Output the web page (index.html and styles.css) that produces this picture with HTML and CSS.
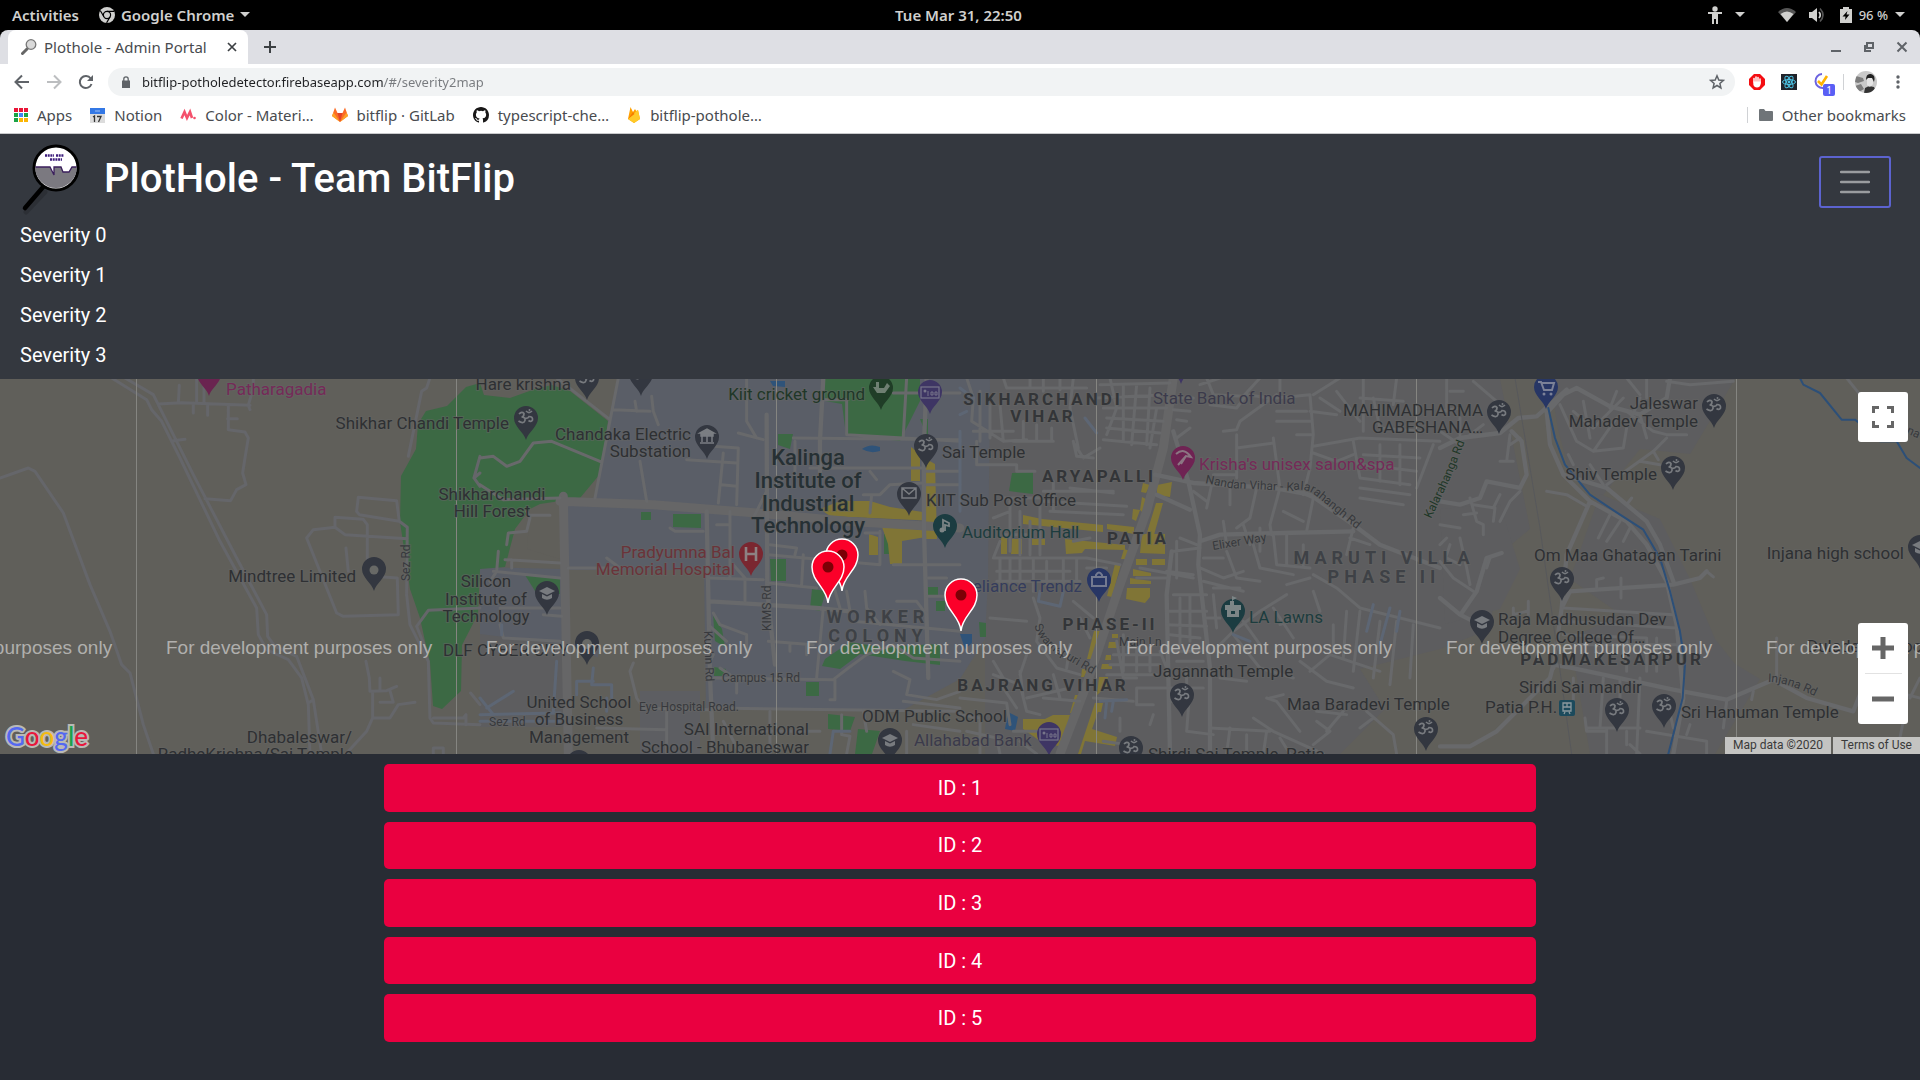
FILE: index.html
```html
<!DOCTYPE html>
<html lang="en">
<head>
<meta charset="utf-8">
<meta name="viewport" content="width=device-width, initial-scale=1">
<title>Plothole - Admin Portal</title>
<link rel="stylesheet" href="styles.css">
</head>
<body>
<header class="topbar">
  <div class="topbar-group">
    <button class="top-btn">Activities</button>
    <button class="top-btn top-app">
      <svg width="16" height="16" viewBox="0 0 16 16"><circle cx="8" cy="8" r="8" fill="#d0d0ce"/><circle cx="8" cy="8" r="3.6" fill="none" stroke="#000" stroke-width="1.2"/><path d="M8 4.4h7M4.900 9.800L1.400 3.800M11.100 9.800L7.600 15.900" stroke="#000" stroke-width="1.200"/></svg>
      <span>Google Chrome</span>
      <svg width="10" height="6" viewBox="0 0 10 6"><path d="M0 0h10L5 5z" fill="#d0d0ce"/></svg>
    </button>
  </div>
  <time class="clock">Tue Mar 31, 22:50</time>
  <div class="topbar-group topbar-right">
    <button class="top-btn top-access" aria-label="Accessibility">
      <svg width="16" height="18" viewBox="0 0 16 18" fill="#d0d0ce"><circle cx="8" cy="3" r="2.700"/><path d="M1 6h14v2h-4v10H9v-5H7v5H5V8H1z"/></svg>
      <svg width="10" height="6" viewBox="0 0 10 6"><path d="M0 0h10L5 5z" fill="#d0d0ce"/></svg>
    </button>
    <button class="top-btn top-system" aria-label="System menu">
      <svg width="18" height="14" viewBox="0 0 18 14"><path d="M0 4Q9-4 18 4L9 14z" fill="#555"/><path d="M2.500 6Q9 1 15.500 6L9 14z" fill="#d0d0ce"/></svg>
      <svg width="18" height="16" viewBox="0 0 18 16"><path d="M0 5h3l5-4v14l-5-4H0z" fill="#d0d0ce"/><path d="M10 5q2.500 3 0 6" fill="none" stroke="#d0d0ce" stroke-width="1.800"/><path d="M11 1.500q6 6.500 0 13" fill="none" stroke="#555" stroke-width="1.600"/></svg>
      <svg width="12" height="16" viewBox="0 0 12 16"><path d="M0 2h3V0h6v2h3v14H0z" fill="#d0d0ce"/><path d="M7.500 4L2.500 9.500h3L5 13l4.500-5.500h-3z" fill="#000"/></svg>
      <span class="battery">96 %</span>
      <svg width="10" height="6" viewBox="0 0 10 6"><path d="M0 0h10L5 5z" fill="#d0d0ce"/></svg>
    </button>
  </div>
</header>

<section class="browser" aria-label="Browser">
  <div class="tabstrip">
    <div class="tab">
      <svg width="16" height="16" viewBox="0 0 16 16"><path d="M6 10l-4.500 4.500" stroke="#666" stroke-width="3" stroke-linecap="round"/><circle cx="10" cy="5.500" r="4.800" fill="#d9d9d9" stroke="#777" stroke-width="1.300"/></svg>
      <span class="tab-title">Plothole - Admin Portal</span>
      <button class="plain" aria-label="Close tab"><svg width="10" height="10" viewBox="0 0 10 10"><path d="M1 1l8 8M9 1L1 9" stroke="#3c4043" stroke-width="1.700"/></svg></button>
    </div>
    <button class="plain new-tab" aria-label="New tab"><svg width="12" height="12" viewBox="0 0 12 12"><path d="M6 0v12M0 6h12" stroke="#3c4043" stroke-width="2"/></svg></button>
    <div class="window-buttons">
      <button class="plain" aria-label="Minimize"><svg width="12" height="12" viewBox="0 0 12 12"><path d="M1 10h10" stroke="#5f6368" stroke-width="2"/></svg></button>
      <button class="plain" aria-label="Restore"><svg width="12" height="12" viewBox="0 0 12 12" fill="none" stroke="#5f6368" stroke-width="2"><path d="M4 2h6v5H4zM2 4v6h6"/></svg></button>
      <button class="plain" aria-label="Close"><svg width="12" height="12" viewBox="0 0 12 12"><path d="M1.500 1.500l9 9M10.500 1.500l-9 9" stroke="#5f6368" stroke-width="2"/></svg></button>
    </div>
  </div>
  <div class="toolbar">
    <button class="plain" aria-label="Back"><svg width="16" height="16" viewBox="0 0 16 16" fill="none" stroke="#5f6368" stroke-width="2"><path d="M15 8H2M8 1.500L1.500 8 8 14.500"/></svg></button>
    <button class="plain" aria-label="Forward"><svg width="16" height="16" viewBox="0 0 16 16" fill="none" stroke="#bcbec0" stroke-width="2"><path d="M1 8h13M8 1.500L14.500 8 8 14.500"/></svg></button>
    <button class="plain" aria-label="Reload"><svg width="16" height="16" viewBox="0 0 16 16"><path d="M13.500 10a6 6 0 1 1-.8-5.500" fill="none" stroke="#5f6368" stroke-width="2"/><path d="M15 1v6H9z" fill="#5f6368"/></svg></button>
    <div class="omnibox">
      <svg width="10" height="12" viewBox="0 0 10 12"><path d="M1 4.500h8V12H1z" fill="#5f6368"/><path d="M2.800 5V3a2.200 2.200 0 0 1 4.400 0v2" fill="none" stroke="#5f6368" stroke-width="1.300"/></svg>
      <input class="url" type="text" aria-label="Address" value="bitflip-potholedetector.firebaseapp.com/#/severity2map">
      <button class="plain" aria-label="Bookmark this page"><svg width="16" height="16" viewBox="0 0 16 16"><path d="M8 1.800l1.800 4.200 4.500.4-3.400 3 1 4.500L8 11.500l-3.900 2.400 1-4.500-3.400-3 4.500-.4z" fill="none" stroke="#5f6368" stroke-width="1.500"/></svg></button>
    </div>
    <div class="extensions">
      <button class="plain" aria-label="Ad blocker"><svg width="16" height="16" viewBox="0 0 16 16"><path d="M5 0h6l5 5v6l-5 5H5l-5-5V5z" fill="#f40d12"/><path d="M5 8V4.500M7 8V3M9 8V3.500M11 9V5" stroke="#fff" stroke-width="1.500" stroke-linecap="round"/><path d="M4.300 7.500h7.400v2.500q-.7 3.500-3.700 3.500-3 0-3.700-3z" fill="#fff"/></svg></button>
      <button class="plain" aria-label="React tools"><svg width="16" height="16" viewBox="0 0 16 16"><path d="M0 0h16v16H0z" fill="#20232a"/><g fill="none" stroke="#4cc3e4" stroke-width="1"><ellipse cx="8" cy="8" rx="6.500" ry="2.500"/><ellipse cx="8" cy="8" rx="6.500" ry="2.500" transform="rotate(60 8 8)"/><ellipse cx="8" cy="8" rx="6.500" ry="2.500" transform="rotate(120 8 8)"/></g><circle cx="8" cy="8" r="1.400" fill="#4cc3e4"/></svg></button>
      <button class="plain tick" aria-label="Tasks"><svg width="22" height="22" viewBox="0 0 22 22"><path d="M9 3A7 7 0 1 0 10 17" fill="none" stroke="#6c63e0" stroke-width="2"/><path d="M5 10l3.500 3.500L14 5" fill="none" stroke="#ffb300" stroke-width="2.600"/></svg><span class="badge">1</span></button>
      <span class="divider"></span>
      <button class="plain" aria-label="Profile"><svg width="22" height="22" viewBox="0 0 22 22"><clipPath id="av"><circle cx="11" cy="11" r="11"/></clipPath><g clip-path="url(#av)"><path d="M0 0h22v22H0z" fill="#c9c9c9"/><path d="M1 5l7 2 1 3-6 2-3-1zM0 15l6-2 3 5-5 3z" fill="#7d7d7d"/><path d="M9 22l1-5 4-2 5 1 3 6z" fill="#333"/><path d="M12 7q3-3 6 0v6q-3 5-6 1z" fill="#e4e4e4"/><path d="M11 9q0-7 5-6 5 1 3 8l-2-4-4 0z" fill="#222"/></g></svg></button>
      <button class="plain menu" aria-label="Menu"><svg width="4" height="14" viewBox="0 0 4 14" fill="#5f6368"><circle cx="2" cy="2" r="1.700"/><circle cx="2" cy="7" r="1.700"/><circle cx="2" cy="12" r="1.700"/></svg></button>
    </div>
  </div>
  <nav class="bookmarks" aria-label="Bookmarks">
    <a href="#"><svg width="14" height="14" viewBox="0 0 14 14"><path d="M0 0h4v4H0zM5 0h4v4H5zM10 0h4v4h-4z" fill="#ea1537"/><path d="M0 5h4v4H0zM0 10h4v4H0z" fill="#1ba345"/><path d="M5 5h4v4H5z" fill="#4285f4"/><path d="M10 5h4v4h-4z" fill="#1ba345"/><path d="M5 10h4v4H5zM10 10h4v4h-4z" fill="#fbb605"/></svg><span>Apps</span></a>
    <a href="#"><svg width="15" height="15" viewBox="0 0 15 15"><path d="M0 0h15v6H0z" fill="#3478e5"/><path d="M0 6h15v9H0z" fill="#dcdcdc"/><path d="M5 3h5" stroke="#9fc0f5"/><path d="M3 9l1.500-1v6M7 8.500h4L8.500 14" fill="none" stroke="#333" stroke-width="1.300"/></svg><span>Notion</span></a>
    <a href="#"><svg width="16" height="16" viewBox="0 0 16 16"><path d="M1.500 11.500L4.500 5l2.500 6L10 5l2 6" fill="none" stroke="#f4516c" stroke-width="2.600"/><circle cx="14.500" cy="11" r="1.300" fill="#f4516c"/></svg><span>Color - Materi…</span></a>
    <a href="#"><svg width="16" height="16" viewBox="0 0 16 16"><path d="M0 9l3-8.500L5.500 6h5L13 .5 16 9l-8 6z" fill="#fc6d26"/><path d="M5.500 6h5L8 15z" fill="#e24329"/><path d="M0 9l1.500-3.500L8 15zM16 9l-1.500-3.500L8 15z" fill="#fca326"/></svg><span>bitflip · GitLab</span></a>
    <a href="#"><svg width="16" height="16" viewBox="0 0 16 16"><path fill="#181717" d="M8 0C3.580 0 0 3.580 0 8c0 3.540 2.290 6.530 5.470 7.590.4.070.55-.17.55-.38v-1.490c-2.010.37-2.530-.49-2.690-.94-.09-.23-.48-.94-.82-1.130-.28-.15-.68-.52-.01-.53.63-.01 1.080.58 1.230.82.72 1.210 1.870.87 2.330.66.070-.52.280-.87.510-1.070-1.780-.2-3.640-.89-3.640-3.950 0-.87.310-1.590.82-2.150-.08-.2-.36-1.020.08-2.120 0 0 .67-.21 2.200.82a7.600 7.600 0 0 1 4 0c1.530-1.040 2.200-.82 2.200-.82.44 1.100.16 1.920.08 2.120.51.56.82 1.270.82 2.150 0 3.070-1.870 3.750-3.650 3.950.29.25.54.73.54 1.480v2.200c0 .21.15.46.55.38A8 8 0 0 0 16 8c0-4.420-3.580-8-8-8z"/></svg><span>typescript-che…</span></a>
    <a href="#"><svg width="14" height="16" viewBox="0 0 14 16"><path d="M1 12L3.500 0 6 5l2-3 1.500 2.500L11 3l2 9-6 4z" fill="#ffa000"/><path d="M1 12l9-8.500L11 3l2 9-6 4z" fill="#ffca28"/><path d="M1 12l5-7 1.500 2z" fill="#f57c00"/></svg><span>bitflip-pothole…</span></a>
    <a href="#" class="other"><svg width="14" height="12" viewBox="0 0 14 12"><path d="M0 1q0-1 1-1h4l1.500 2H13q1 0 1 1v8q0 1-1 1H1q-1 0-1-1z" fill="#6f7478"/></svg><span>Other bookmarks</span></a>
  </nav>
</section>

<main class="app">
  <nav class="navbar" aria-label="Main">
    <div class="brand-row">
      <a class="brand" href="#">
        <svg width="62" height="72" viewBox="0 0 62 72"><path d="M25 46L6 66" stroke="#000" stroke-opacity=".15" stroke-width="5" stroke-linecap="round" transform="translate(0 3)"/><path d="M24 43L5 65" stroke="#000" stroke-width="4.500" stroke-linecap="round"/><circle cx="36" cy="25" r="22" fill="#fff" stroke="#000" stroke-width="3"/><path d="M15 24h15l4 8v-8h7l2 5h6l3-5h5a21 21 0 0 1-42 0z" fill="#7b7980"/><path d="M15.500 24H30l4 8v-8h7l2 5h6l3-5h4.500" fill="none" stroke="#3b1f5c" stroke-width="1.300"/><path d="M25 12.500h9M36 12.500h8M30 16.500h12" stroke="#3d1d7c" stroke-width="2.400" stroke-dasharray="2 .7"/></svg>
        <span>PlotHole - Team BitFlip</span>
      </a>
      <button class="toggler" aria-label="Toggle navigation"><svg width="30" height="24" viewBox="0 0 30 24"><path d="M1 2h28M1 12h28M1 22h28" stroke="#9a9c9f" stroke-width="2.400" stroke-linecap="round"/></svg></button>
    </div>
    <a class="nav-link" href="#">Severity 0</a>
    <a class="nav-link" href="#">Severity 1</a>
    <a class="nav-link" href="#">Severity 2</a>
    <a class="nav-link" href="#">Severity 3</a>
  </nav>

  <section class="map" aria-label="Map">
    <svg class="map-canvas" width="1920" height="375" viewBox="0 0 1920 375">
      <defs>
        <path id="pin" d="M0 0C-2-8-12-13-12-22a12 12 0 1 1 24 0C12-13 2-8 0 0z"/>
        <g id="om"><use href="#pin"/><path d="M-7-26q3-3 5-.5 0 3.500-2.500 3.500 4 0 3.500 3.500-1.500 4-6.500.5M-2-22q4 1 5-1.500 4 0 3.500 3.500-1.500 2.500-4 .5M0-29q3 3 6 0" fill="none" stroke="#787b7f" stroke-width="1.700"/><circle cx="3.500" cy="-30" r="1" fill="#787b7f"/></g>
        <g id="cap"><use href="#pin"/><path d="M-8-24l8-4 8 4-8 4zM-5-21v4q5 3.500 10 0v-4l-5 2.500z" fill="#787b7f"/></g>
        <g id="money"><use href="#pin"/><rect x="-9" y="-27" width="18" height="11" fill="none" stroke="#77758a" stroke-width="1.200"/><circle cx="-5" cy="-23" r="1.500" fill="#77758a"/><path d="M-2-23v5M1-22h2v3H1zM5-22h2v3H5z" fill="none" stroke="#77758a"/></g>
        <g id="marker"><path d="M0 0C-1-15-16-21-16-36a16 16 0 1 1 32 0C16-21 1-15 0 0z" fill="#fb0029" stroke="#fff" stroke-width="1.500"/><circle cy="-36" r="5.500" fill="#7c0006"/></g>
      </defs>

      <rect width="1920" height="375" fill="#605f5a"/>
      <g class="land-city">
        <path d="M985 0H1500L1518 90 1530 150 1500 175 1490 250 1440 270 1360 290 1385 330 1340 375H480V250L560 262 570 265V375H985z"/>
        <path d="M1550 0H1735L1690 75 1640 70 1620 95 1600 120 1570 95 1558 50z"/>
        <path d="M1440 130L1500 125 1520 190 1500 230 1445 245z"/>
        <path d="M1600 115L1660 140 1690 200 1715 260 1735 285 1760 300 1715 375H1590L1570 260 1620 235 1570 200z"/>
      </g>
      <path d="M480 188L562 190V265L480 255z" fill="#5a5e67"/>
      <path d="M618 0H990L988 200 985 260 960 300 905 330H704L570 265V190L558 130 595 118 608 42z" fill="#5a5e67"/>
      <path d="M570 191H704L706 330H640L598 310V265H570zM0 348H570V375H0zM600 310H650V330H600zM530 130H560V180L527 170z" fill="#605f5a"/>
      <path d="M640 312H700V375H640z" fill="#5d5e62"/>
      <path d="M401 97L416 70 418 45 426 32 447 27 466 8 480 4 484 16 510 19 535 10 552 6 570 12 608 42 600 95 580 119 540 125 530 130 515 150 505 188 480 190 478 235 462 266 461 312 442 330 433 327 430 283 425 262 420 239 410 210 400 143z" fill="#3c6944"/>
      <path d="M823 0H920V22L900 62 846 56 842 25 825 22zM778 55H793L790 70 778 66zM641 133H651V141H641zM673 135H701V149L673 148zM525 196L560 200V215L535 212zM770 180H786V202H771zM812 210L826 212 820 232 810 230zM825 280L850 263 880 268 940 265V286L905 282 860 275 840 290 822 287zM828 335L855 338 850 352 828 350zM858 350L880 352 872 375H855zM806 303H819V317H806zM713 235L722 250 725 268 715 262zM714 288L726 290 722 297 714 297zM1012 94L1033 93V115L1009 112zM979 243L986 244V258L980 258zM928 208H938V216H928zM936 222H945V232H936zM928 60V40H920zM884 155H890V175H884z" fill="#3c6944"/>
      <path d="M862 70Q870 64 880 68V72Q870 75 862 70zM770 2H785V8L773 7zM960 255H972V264L965 270zM1008 333L1018 338 1015 352 1005 350z" fill="#2f5379"/>
      <g class="commerce">
        <path d="M911 68L920 75V102H911zM926 80L935 85 937 160H925zM820 130L840 122H870L890 128 936 135V142L830 137zM882 148H926V158L902 162V185L890 185 888 165zM869 155L878 158V176H869z"/>
        <path d="M1001 158H1007V175H1001zM1012 160H1022V175H1011zM1023 136L1042 140 1103 146V153L1023 145zM1065 160L1125 166V171L1085 170 1082 174 1066 175zM1107 145L1134 148V155L1107 150zM1032 160H1045V166H1032z"/>
        <path d="M1143 104L1150 106 1146 114 1141 113zM1133 130L1140 131 1136 142 1132 140zM1157 106L1172 103 1170 118 1157 116zM1156 124H1163L1150 170H1142zM1142 155H1165V175L1140 174zM1130 172L1127 180H1121L1124 170zM1136 180H1147V186H1136zM1152 180H1165V186H1152zM1115 185H1121L1112 218 1107 217zM1133 190L1151 194V197H1133zM1130 199L1151 202V205H1130zM1127 209H1150V218L1145 224 1126 220z"/>
        <path d="M1094 252H1100L1093 280H1087zM1112 255H1118V259H1112zM1109 263H1117V269H1108zM1106 276H1111V281H1105zM1102 285H1112V290H1101zM1099 298H1108V306L1097 316zM1075 316H1078L1072 334H1070zM1023 340H1045L1053 336H1070L1062 368 1040 362 1023 350zM1095 324H1103L1101 333H1098L1092 350 1117 358 1115 367 1085 362 1081 375H1078z"/>
        <path d="M1082 290H1088L1084 298H1081zM1140 131L1142 118 1146 120 1144 135z"/>
      </g>

      <g transform="translate(0 -1) scale(.3333)" class="roads roads-rural">
        <path d="M335 0L440 65 455 95 485 130 540 240 660 490 770 690 775 770 800 815 865 845 905 900 925 980 930 1128M375 0L460 50 500 130 580 290 710 540 800 710 803 775 825 805 890 835 940 965 965 1128M0 300L85 270 105 280 190 405 270 620 330 760 365 860 390 885 430 1040 460 1128M925 975L940 965M520 188L555 184"/>
        <path d="M475 78L545 74 750 82M535 75L538 22M590 75V0M612 75V0M750 95L745 82 760 30V0M580 75V105M623 80V112M685 82V155L735 162 745 180 735 240 728 285 738 320 710 335 692 368 615 362M683 122H712M1290 0L1280 30 1265 40 1225 235"/>
        <path d="M1070 400L1075 358 1190 368 1198 430 1222 448 1220 650M1070 400L1078 410 1198 430M1005 445V418L1090 424 1102 440V590M920 480L940 455 1005 448 1035 470 1222 482M920 480L1010 705 1030 715 1195 710 1192 600 1150 597M1038 510L1045 580"/>
        <path d="M1220 650L1230 740 1285 850 1290 1020 1300 1035 1440 1040M1098 850L1108 900 1110 940 1160 938 1190 925M1118 940V1020H1170L1195 980 1245 973M1140 973H1180L1170 938M1118 1020L1100 1060 1045 1120M1140 900V935M1300 1128V1110H1330V1128"/>
        <path d="M1440 285L1422 300 1440 325M1440 235L1422 300M1250 745L1285 697 1440 690M1250 745L1280 820M1300 1020H1390L1398 1010V1040M1412 945L1440 980"/>
      </g>
      <g transform="translate(480 -1) scale(.3333)" class="roads">
        <path class="wide" d="M250 355L265 1128M240 370L520 380 830 405 1100 430 1440 450"/>
        <path class="mid" d="M1340 0L1332 200V450L1345 900M680 400L690 890 700 1128M860 110L862 640 885 860M1030 0L1020 190V300M690 670L1010 690 1110 700"/>
        <path d="M0 240L40 235 80 265 120 250 160 195 215 190 360 250M415 0L345 360M230 0L390 125M400 95L510 100M465 70L470 100M515 55L520 100 535 140M800 0V130L830 180M775 165L850 185M620 245L770 255M770 380L775 210 700 205M730 225L715 375M725 320L770 325M480 250L500 370M0 320L70 365 240 360"/>
        <path d="M80 500L85 465 140 460 150 420 140 400M150 412H210M55 520L50 580 30 610M75 545L240 555M40 580L240 600M95 545V570M190 710L245 715M60 690H240M60 740L70 780 240 790M265 570L420 570M380 540L420 570M570 450L585 460H670M685 600L850 605M750 400V600M710 440H750M760 560L795 600V670M870 500L950 510 945 530M865 530L1200 560V460M970 530L965 620M865 615L1010 630M1030 690L1010 900"/>
        <path d="M1100 70V170L1440 190M1270 175L1280 0M940 180L1440 185M1025 65H1100M1240 45H1440M990 270H1330M1170 280L1190 305M1150 350H1200L1230 320 1330 315M945 190V290M1340 320H1440M1340 280H1440M1175 350L1170 405M1155 465H1200M1240 560H1440M1345 600H1400M860 340L820 420"/>
        <path d="M700 705L720 740 800 770V830M690 745L740 790M720 870L750 890M700 830L690 850M700 900L1060 905 1105 870 1160 830 1240 800 1300 840 1440 850M1065 905V965H1050M1240 880L1290 905 1280 950 1370 965 1440 940M770 910V945M690 990L1440 1000M865 790L1000 800M930 800V820M980 800V830M1060 620L1080 690M1100 640L1110 700M1155 640L1160 690 1200 740M1120 730L1440 760M1250 670H1310L1340 710M1340 655H1440"/>
        <path d="M460 855L450 880 470 960 490 990 690 995M350 1050L560 1055M560 1000V1128M870 1000V1128M730 1030L780 1128M850 1060H1020M1150 1000L1160 1060M1280 1060V1128M1300 1040L1440 1060M1270 970L1440 990M1100 1128L1110 1075 1085 1070V1010"/>
        <path class="campus" d="M0 960L40 1010M20 990L100 940M0 1010L240 1005M230 850L220 1000M340 870L335 920H395V960M290 950V910H340M380 960V1000M65 740V770M0 1030H240M1050 1128L1060 1060H1110"/>
      </g>
      <g transform="translate(960 -1) scale(.3333)" class="roads">
        <path class="wide" d="M640 0L610 210 560 400 480 620 420 800 380 920 300 1128"/>
        <path class="mid" d="M640 160L685 310 720 470 715 560 750 870V1128M585 290L700 315 940 330 1050 350 1180 440 1260 500 1440 570M590 350L690 395M720 490L780 470 970 465 1180 460M635 520L620 650 630 1128"/>
        <path d="M20 0L40 60 35 130 130 190M60 40V190M90 80V180M120 80L130 190 200 185M40 160H160M190 130V190M230 140V190M275 150V190M160 190H280M130 0L140 30H380M210 0V30M250 0V40M300 0V35M340 0L330 90 355 210M345 200L370 240 420 210M50 190V260H170V280H225M340 190L350 235 400 240"/>
        <path d="M410 60L620 50M420 20L630 15M430 90L620 90M440 120L610 130M450 0L470 90 440 170M490 20V190M530 20L515 200M570 30L560 200M590 90L570 210M440 150L600 165M430 185L590 200M640 60L700 60M640 95L690 100M650 125L680 130M650 180L690 150"/>
        <path d="M740 0L760 50 850 55 900 0M720 20L780 0M750 80L830 90 860 50 930 60M790 160L830 155 840 130 950 50M830 170V300M950 60L1050 50 1060 170 1050 270 1030 350M940 180L960 330 930 440 935 470M830 210L940 195M950 100H1040M950 130H1050M1050 100L1130 110M960 0V40M1060 50L1140 0M1080 60L1140 100M1010 170H1060M1060 205L1200 180 1440 190M1060 225L1130 250 1180 230M990 330L1060 360 1040 460M970 400L1030 430M755 320L740 390M810 320V380M890 330L870 420 830 450M700 340L740 370M760 290L830 290"/>
        <path d="M1210 0V160M1240 60L1260 150 1380 160M1130 40L1200 130M1200 60L1330 70M1310 0L1300 80M1180 190L1200 300 1350 320M1210 230L1380 240M1210 260L1370 280M1260 200V310M1320 200V320M1200 330L1350 350M1200 360L1330 380M1370 330L1420 200"/>
        <path d="M250 340H460M280 310V400M330 330L460 345M130 360H240M150 370V520M180 400V530M210 430V530M240 380V520M250 370L500 385M270 400L490 410M130 470H200M100 420L150 400M120 490L100 540H190L380 540 480 560M120 540V640M150 540V630M180 545V640M220 545V640M260 550V620M310 540V630M350 545V630M110 580H330M110 610H360M240 480V530M340 490L390 480M380 570H440"/>
        <path d="M540 570L700 600M530 600H620M640 520L720 510M650 490V600M660 480L710 500M620 580L700 590M720 570L790 600 850 580M800 520L830 600 900 610M790 430L800 500M880 500L900 570 1000 590M730 540H790M850 440L870 500M900 450V520M940 470L950 560 1050 570M1030 500V560M980 470V560M1180 450L1160 530M1170 480L1230 500M1060 590L1130 630 1200 690 1440 750M760 630H840M730 610L850 640M620 700H740M620 740L740 745M630 770L720 780M640 650H740M660 660V800M690 650V790M760 650L770 750M740 720H780"/>
        <path d="M470 790L490 900 530 900M460 830H600M450 860H600M440 890H590M490 770V880M530 810V880M570 810V880M600 820L620 870M530 930H730M530 930V980H580M630 970H680M690 930L680 1060 760 1070M580 1010L570 1040M480 1020V1060M400 960L520 970M640 820H720M650 850H730M680 870V960"/>
        <path d="M220 660L240 720 230 790 290 870 360 890M90 720L200 730M100 850L130 900M100 890L180 920 200 1000 240 1010M130 930L170 990M180 880L190 960M200 830L180 890M0 960L140 975 150 1040M0 1010L60 1020M20 1060L110 1080 120 1128M60 1020V1128M250 960L360 970M280 890L300 960M200 960L330 930M330 800L320 870M340 670L400 720M360 720L390 780M160 1060H250M180 1090L230 1128"/>
        <path d="M780 800L820 760 900 700 980 650M850 730L900 800M820 770L900 870 1000 900M940 690L1000 780M960 740L1020 720M1060 640L1080 700M1020 850L1100 910 1180 930M1050 880L1110 830 1260 880M1120 740V820M1160 700L1150 840M1200 700L1180 880M1260 730L1240 900M1310 730L1290 920M1360 740L1350 900M980 620L1050 600"/>
        <path d="M920 960L950 970 1020 1060M930 960L970 950M880 1020L940 1060 1090 1128M1070 1000L1160 1010M1070 1030L1110 1060 1060 1100M1150 1000L1100 1060M750 1050L930 1060M810 1050L800 1128M860 1070V1128M920 1060L910 1128M1220 1000L1300 1070 1310 1128M1240 1020L1200 1050M780 900L860 910M960 1080L990 1128M430 1090L500 1100"/>
        <path class="campus" d="M0 30L40 60M20 100L0 110M375 120L410 165M240 640L235 670 300 685 310 640M420 970L500 965M440 970L435 1020M460 970L455 1000M1240 680L1220 760M1290 690L1260 800M1320 700L1310 760M820 770L870 790M0 160V400"/>
      </g>
      <g transform="translate(1440 -1) scale(.3333)" class="roads">
        <path class="mid" d="M320 100L330 200 370 290 450 370 560 430 620 500 680 610 710 740 725 900 730 960 700 1128M325 100L370 50 410 30 510 85 600 110 680 60 690 0M370 290L500 330 620 430 660 500 700 610M0 370L60 380 120 360 140 310 240 330 260 290 245 190 215 160M0 210L60 180 180 165 235 120 290 115 380 35M0 660L60 710 120 740M65 705L110 640 140 540 185 525M0 1105H90L170 1060 330 900 340 860 395 870 700 935 860 965 1000 905 1100 960 1240 1000 1260 950M390 640L700 620 780 600 800 580M390 640L365 690 340 870M450 370L380 530 365 690"/>
        <path d="M0 100L60 90M20 0V100M30 40H70M100 10L170 70M130 140L90 170M0 160L60 200M60 120V170M210 170L200 250M240 180L210 200M180 250H220M400 100L460 150 550 60M360 80L410 190 460 220 530 120M460 220L550 210 560 150M430 70L450 180M600 110L620 180M560 100L640 160 680 170H740M500 320L640 220 680 180M600 250L660 260M640 220L655 245M385 230L400 260M450 260L490 320M680 10L750 20 880 10M560 0L600 50M620 0V60M510 90L530 40M570 130L600 60"/>
        <path d="M90 360L110 430 130 440V470M70 410L110 405M100 380L165 390 160 430M160 390L180 350M180 430L210 370 240 340M0 440L60 450M0 500L20 480M60 480L80 570 90 620M20 540L60 560M320 340L380 350 440 385M475 480L510 410M500 490L540 430M550 490L570 450M560 380L575 360M0 550L40 600 100 640M30 500L10 560M150 540L140 570M470 630V605L490 600M543 600V660M800 580L820 597"/>
        <path d="M370 690L700 710M370 730L710 750M370 770L620 780M420 800H710M560 790V880M620 780V880M650 780V880M220 690V740M265 670V710M220 710L260 700M400 900V980M490 900L480 1050M600 900L590 1128M540 900V960M435 1020L440 1060H500M440 1050H600M500 1050V1128M560 1060V1100M680 960L700 1050M620 1060L800 1090V1128M570 1100L600 1128M750 1040L740 1070M860 970L850 1050M940 940L935 965M1010 780V900M1370 1128L1390 1030M1400 950L1440 960M1440 900L1410 960M1220 0L1260 50"/>
        <path class="rail" d="M225 0L300 450 395 1128"/>
        <path class="river" d="M325 90L345 180 375 260 450 350 540 410 610 455 660 540 690 640 720 760 735 860 728 960 685 1128M1080 0L1090 20 1140 45 1205 125H1245L1290 160 1320 190H1370L1400 240 1440 270"/>
      </g>

      <g class="tile-lines"><path d="M136.500 0V375M456.500 0V375M776.500 0V375M1096.500 0V375M1416.500 0V375M1736.500 0V375"/></g>

      <g fill="#333740">
        <use href="#om" x="526" y="61"/><use href="#om" x="587" y="21"/><use href="#om" x="641" y="17"/>
        <use href="#pin" x="374" y="212"/><circle cx="374" cy="191" r="4.500" fill="#686966"/>
        <use href="#cap" x="547" y="236"/><use href="#pin" x="587" y="286"/><circle cx="587" cy="265" r="5" fill="#686966"/>
        <use href="#pin" x="707" y="80"/><path d="M700 54l7-4 7 4zM701 55h12v2h-12zM702 57v6M707 57v6M712 57v6M700 64h14" stroke="#7b7e82" stroke-width="1.500" fill="#7b7e82"/>
        <use href="#om" x="926" y="89"/><use href="#pin" x="909" y="137"/><path d="M902 109h14v10h-14zl7 6 7-6" fill="none" stroke="#7b7e82" stroke-width="1.500"/>
        <use href="#cap" x="890" y="383"/><use href="#om" x="1499" y="55"/><use href="#om" x="1182" y="338"/><use href="#om" x="1426" y="372"/><use href="#om" x="1131" y="391"/>
        <use href="#om" x="1714" y="49"/><use href="#om" x="1673" y="111"/><use href="#om" x="1562" y="222"/><use href="#cap" x="1920" y="190"/><use href="#cap" x="1482" y="265"/><use href="#om" x="1617" y="353"/><use href="#om" x="1664" y="349"/><use href="#pin" x="579" y="405"/>
      </g>
      <use href="#pin" x="209" y="17" fill="#6a2450"/>
      <g fill="#203d27"><use href="#pin" x="881" y="31"/></g><path d="M873 8l4 6h8l5-7-3-3-3 5h-5V3h-3v5z" fill="#6f7f72"/>
      <g fill="#3e3564"><use href="#money" x="930" y="35"/><use href="#money" x="1049" y="377"/><use href="#pin" x="1181" y="5"/></g>
      <g fill="#1b3c41"><use href="#pin" x="945" y="169"/><use href="#pin" x="1233" y="254"/></g>
      <path d="M943 150v-9l6 3v3l-4-1v6" fill="none" stroke="#7c8586" stroke-width="1.800"/><circle cx="942" cy="151" r="2.500" fill="#7c8586"/>
      <path d="M1225 226h5v-4h4v4h7v5h-2v7h-12v-7h-2z" fill="#7c8586"/><path d="M1231 232h4v3h-4z" fill="#1b3c41"/><path d="M1232 223v-6l5 2-4 2" fill="#7c8586"/>
      <use href="#pin" x="751" y="197" fill="#7a2730"/><path d="M746 168v14M756 168v14M746 175h10" stroke="#8d8283" stroke-width="2.600"/>
      <use href="#pin" x="1183" y="101" fill="#6f2353"/><path d="M1176 75q8-7 15 3l-5-1-5 8M1186 77l-8 9" stroke="#8c7683" stroke-width="2" fill="none"/>
      <g fill="#273665"><use href="#pin" x="1099" y="223"/><use href="#pin" x="1546" y="30"/></g>
      <path d="M1092 198h14v9h-14zM1096 198v-2q3-5 6 0v2" fill="none" stroke="#737a90" stroke-width="2"/><path d="M1538 3h3l3 8h8l2-7h-12" fill="none" stroke="#7b8197" stroke-width="2"/><circle cx="1544" cy="15" r="1.500" fill="#7b8197"/><circle cx="1551" cy="15" r="1.500" fill="#7b8197"/>
      <rect x="1559" y="321" width="16" height="16" rx="2" fill="#1c4a5c"/><path d="M1563 324h8v8h-8zM1563 328h8M1567 324v4M1564 335l1-2M1570 335l-1-2" fill="none" stroke="#8c999e" stroke-width="1.300"/>

      <g class="labels">
        <text x="226" y="16" class="pink">Patharagadia</text>
        <text x="509" y="50" class="end">Shikhar Chandi Temple</text>
        <text x="571" y="11" class="end">Hare krishna</text>
        <text x="492" y="121" class="mid-text">Shikharchandi</text><text x="492" y="138" class="mid-text">Hill Forest</text>
        <text x="356" y="203" class="end">Mindtree Limited</text>
        <text x="486" y="208" class="mid-text">Silicon</text><text x="486" y="226" class="mid-text">Institute of</text><text x="486" y="243" class="mid-text">Technology</text>
        <text x="443" y="277">DLF CYBER CITY</text>
        <text x="691" y="61" class="end">Chandaka Electric</text><text x="691" y="78" class="end">Substation</text>
        <text x="865" y="21" class="end forest">Kiit cricket ground</text>
        <text x="942" y="79">Sai Temple</text>
        <text x="926" y="127">KIIT Sub Post Office</text>
        <text x="962" y="159" class="teal">Auditorium Hall</text>
        <text x="735" y="179" class="end hospital">Pradyumna Bal</text><text x="735" y="196" class="end hospital">Memorial Hospital</text>
        <text x="579" y="329" class="mid-text">United School</text><text x="579" y="346" class="mid-text">of Business</text><text x="579" y="364" class="mid-text">Management</text>
        <text x="809" y="356" class="end">SAI International</text><text x="809" y="374" class="end">School - Bhubaneswar</text>
        <text x="862" y="343">ODM Public School</text><text x="914" y="367" class="violet">Allahabad Bank</text>
        <text x="352" y="364" class="end">Dhabaleswar/</text><text x="353" y="381" class="end">RadheKrishna/Sai Temple</text>
        <text x="1153" y="25" class="violet">State Bank of India</text>
        <text x="1483" y="37" class="end">MAHIMADHARMA</text><text x="1483" y="54" class="end">GABESHANA…</text>
        <text x="1199" y="91" class="pink">Krisha's unisex salon&amp;spa</text>
        <text x="1082" y="213" class="end blue">Reliance Trendz</text>
        <text x="1249" y="244" class="teal">LA Lawns</text>
        <text x="1153" y="298">Jagannath Temple</text><text x="1287" y="331">Maa Baradevi Temple</text>
        <text x="1148" y="381">Shirdi Sai Temple, Patia</text>
        <text x="1698" y="30" class="end">Jaleswar</text><text x="1698" y="48" class="end">Mahadev Temple</text>
        <text x="1657" y="101" class="end">Shiv Temple</text><text x="1534" y="182">Om Maa Ghatagan Tarini</text>
        <text x="1904" y="180" class="end">Injana high school</text>
        <text x="1498" y="246">Raja Madhusudan Dev</text><text x="1498" y="264">Degree College Of…</text>
        <text x="1519" y="314">Siridi Sai mandir</text><text x="1485" y="334">Patia P.H.</text><text x="1681" y="339">Sri Hanuman Temple</text>
        <text x="1807" y="273">Duladevi school</text>
      </g>
      <g class="labels university"><text x="808" y="86">Kalinga</text><text x="808" y="109">Institute of</text><text x="808" y="132">Industrial</text><text x="808" y="154">Technology</text></g>
      <g class="labels district">
        <text x="1043" y="26">SIKHARCHANDI</text><text x="1043" y="43">VIHAR</text><text x="1099" y="103">ARYAPALLI</text><text x="1138" y="165">PATIA</text><text x="1110" y="251">PHASE-II</text><text x="1043" y="312">BAJRANG VIHAR</text><text x="1612" y="286">PADMAKESARPUR</text>
      </g>
      <g class="labels district locality"><text x="878" y="244">WORKER</text><text x="878" y="263">COLONY</text><text x="1384" y="185">MARUTI VILLA</text><text x="1384" y="204">PHASE II</text></g>
      <g class="labels street">
        <path id="r1" d="M1205 104L1230 109 1290 112Q1305 108 1315 116L1360 153"/><path id="r2" d="M1213 171L1280 160"/><path id="r3" d="M1034 247Q1042 266 1056 274L1090 294"/><path id="r4" d="M1768 303Q1788 303 1820 320"/><path id="r5" d="M1431 140L1450 100 1468 55"/>
        <text><textPath href="#r1">Nandan Vihar - Kalarahangh Rd</textPath></text><text><textPath href="#r2">Elixer Way</textPath></text><text><textPath href="#r3">Swarnapuri Rd</textPath></text><text><textPath href="#r4">Injana Rd</textPath></text><text class="forest"><textPath href="#r5">Kalarahanga Rd</textPath></text>
        <text x="722" y="303">Campus 15 Rd</text><text x="639" y="332">Eye Hospital Road.</text><text x="489" y="347">Sez Rd</text><text x="1119" y="267">Main Ln</text>
        <text transform="translate(410 202) rotate(-90)">Sez Rd</text><text transform="translate(771 252) rotate(-90)">KIMS Rd</text><text transform="translate(704 252) rotate(88)">Kushn Rd</text><text transform="translate(1906 54) rotate(25)">na Rd</text>
      </g>
      <g class="watermark"><text x="-154" y="275">For development purposes only</text><text x="166" y="275">For development purposes only</text><text x="486" y="275">For development purposes only</text><text x="806" y="275">For development purposes only</text><text x="1126" y="275">For development purposes only</text><text x="1446" y="275">For development purposes only</text><text x="1766" y="275">For development purposes only</text></g>
      <use href="#marker" x="842" y="212"/><use href="#marker" x="828" y="224"/><use href="#marker" x="961" y="252"/>
    </svg>
    <a class="google" href="#" aria-label="Google"><span class="g-blue">G</span><span class="g-red">o</span><span class="g-yellow">o</span><span class="g-blue">g</span><span class="g-green">l</span><span class="g-red">e</span></a>
    <div class="map-controls">
      <button class="map-btn" aria-label="Full screen"><svg width="22" height="22" viewBox="0 0 22 22"><path d="M1.500 7V1.500H7M15 1.500h5.500V7M20.500 15v5.500H15M7 20.500H1.500V15" fill="none" stroke="#666" stroke-width="3"/></svg></button>
      <div class="zoom">
        <button class="map-btn" aria-label="Zoom in"><svg width="22" height="22" viewBox="0 0 22 22"><path d="M11 0v22M0 11h22" stroke="#666" stroke-width="5"/></svg></button>
        <button class="map-btn" aria-label="Zoom out"><svg width="22" height="22" viewBox="0 0 22 22"><path d="M0 11h22" stroke="#666" stroke-width="5"/></svg></button>
      </div>
    </div>
    <div class="attribution"><span>Map data ©2020</span><a href="#">Terms of Use</a></div>
  </section>

  <div class="id-list">
    <button class="id-btn">ID : 1</button>
    <button class="id-btn">ID : 2</button>
    <button class="id-btn">ID : 3</button>
    <button class="id-btn">ID : 4</button>
    <button class="id-btn">ID : 5</button>
  </div>
</main>
</body>
</html>
```
FILE: styles.css
```css
* { box-sizing: border-box; }

body {
  margin: 0;
  min-height: 100vh;
  background: #282c34;
  font-family: Roboto, sans-serif;
}

svg { display: block; flex: none; }
a { color: inherit; text-decoration: none; }
button { font: inherit; color: inherit; border: 0; margin: 0; padding: 0; background: none; cursor: pointer; }
.plain { display: flex; align-items: center; justify-content: center; }

/* Desktop top bar */
.topbar {
  display: grid;
  grid-template-columns: 1fr auto 1fr;
  align-items: center;
  height: 30px;
  padding: 0 15px 0 12px;
  background: #000;
  color: #d0d0ce;
  font: 600 15px/30px "Noto Sans", sans-serif;
}
.topbar-group { display: flex; align-items: center; gap: 20px; }
.topbar-right { justify-content: flex-end; gap: 33px; }
.top-btn { display: flex; align-items: center; gap: 6px; }
.top-access { gap: 12px; }
.top-system { gap: 13px; }
.battery { font-size: 13px; font-weight: 500; margin: 0 -6px; }

/* Browser window */
.browser { font-family: "Noto Sans", sans-serif; color: #484b4f; background: #000; }
.tabstrip {
  display: flex;
  align-items: center;
  height: 34px;
  padding: 0 12px 0 8px;
  background: #dedfe4;
  border-radius: 8px 8px 0 0;
}
.tab {
  display: flex;
  align-items: center;
  width: 240px;
  height: 34px;
  padding: 0 11px 0 13px;
  gap: 7px;
  background: #fff;
  border-radius: 8px 8px 0 0;
  font-size: 15px;
}
.tab-title { flex: 1; white-space: nowrap; }
.new-tab { margin-left: 16px; }
.window-buttons { display: flex; gap: 21px; margin-left: auto; }
.toolbar {
  display: flex;
  align-items: center;
  gap: 16px;
  height: 36px;
  padding: 0 20px 0 14px;
  background: #fff;
}
.omnibox {
  flex: 1;
  display: flex;
  align-items: center;
  gap: 11px;
  height: 28px;
  padding: 0 10px 0 13px;
  margin: 0 -2px;
  border-radius: 14px;
  background: #f1f3f4;
}
.url {
  flex: 1;
  min-width: 0;
  border: 0;
  padding: 0;
  outline: 0;
  font: 13px/20px "Noto Sans", sans-serif;
  color: transparent;
  background: linear-gradient(90deg, #202124 241px, #777a7e 241px);
  -webkit-background-clip: text;
  background-clip: text;
}
.extensions { display: flex; align-items: center; gap: 16px; }
.tick { position: relative; margin-right: -8px; }
.badge {
  position: absolute;
  right: 0;
  bottom: -3px;
  width: 12px;
  height: 12px;
  border-radius: 2px;
  background: #5a5ff5;
  color: #fff;
  font-size: 10px;
  line-height: 12px;
}
.divider { width: 1px; height: 16px; background: #d0d2d5; margin-right: -5px; }
.menu { margin-left: 3px; }
.bookmarks {
  display: flex;
  align-items: center;
  gap: 18px;
  height: 34px;
  padding: 0 14px 3px;
  background: #fff;
  border-bottom: 1px solid #c9cacc;
  font-size: 15px;
}
.bookmarks a { display: flex; align-items: center; gap: 9px; white-space: nowrap; }
.bookmarks .other { margin-left: auto; padding-left: 11px; border-left: 1px solid #d0d2d5; line-height: 16px; }

/* Site navigation */
.navbar { padding: 0 20px 4px; background: #34383f; color: #fff; }
.brand-row { display: flex; align-items: center; justify-content: space-between; height: 81px; padding: 8px 9px 0 0; }
.brand { display: flex; align-items: center; gap: 22px; font-size: 40px; font-weight: 500; line-height: 60px; }
.toggler {
  display: flex;
  align-items: center;
  justify-content: center;
  width: 72px;
  height: 52px;
  margin-top: 6px;
  border: 2px solid #5c63cf;
  border-radius: 3px;
}
.nav-link { display: block; padding: 5px 0; font-size: 20px; line-height: 30px; }

/* Map */
.map { position: relative; display: flex; justify-content: center; height: 375px; overflow: hidden; background: #605f5a; }
.roads { fill: none; stroke: #68696b; stroke-width: 9; stroke-linejoin: round; stroke-linecap: round; }
.roads-rural { stroke: #65666a; }
.roads .mid { stroke-width: 13; }
.roads .wide { stroke-width: 27; stroke: #666667; }
.roads .campus { stroke: #5d6674; }
.roads .rail { stroke: #57585b; stroke-width: 3; }
.roads .river { stroke: #2c4f78; stroke-width: 6; }
.land-city { fill: #5d5d5f; }
.commerce { fill: #807536; }
.tile-lines { stroke: #858581; fill: none; }
.labels { font-family: Roboto, sans-serif; font-size: 17px; fill: #2e3033; stroke: #65656480; stroke-width: 2px; paint-order: stroke; }
.labels .end { text-anchor: end; }
.labels .mid-text { text-anchor: middle; }
.labels .pink { fill: #752a58; }
.labels .forest { fill: #1f3728; }
.labels .teal { fill: #1c3c3e; }
.labels .hospital { fill: #6b3339; }
.labels .violet { fill: #3b3a4b; }
.labels .blue { fill: #343c5c; }
.university { font-size: 22px; font-weight: 500; text-anchor: middle; fill: #263034; }
.district { font-size: 17px; font-weight: 700; letter-spacing: 3px; text-anchor: middle; fill: #333538; }
.locality { font-size: 18px; letter-spacing: 5px; fill: #3e4146; }
.street { font-size: 12px; fill: #37393d; }
.street path { fill: none; stroke: none; }
.watermark { font-family: "Liberation Sans", Arial, sans-serif; font-size: 19px; fill: #b0afad; }
.google {
  position: absolute;
  left: 6px;
  bottom: 3px;
  font: 500 26px/30px Lato, sans-serif;
  -webkit-text-stroke: 4px #b9b9b6;
  paint-order: stroke fill;
}
.g-blue { color: #5468f0; }
.g-red { color: #e8173c; }
.g-yellow { color: #f5bb10; }
.g-green { color: #1aa24a; }
.map-controls {
  position: absolute;
  top: 13px;
  right: 12px;
  bottom: 30px;
  display: flex;
  flex-direction: column;
  justify-content: space-between;
}
.map-btn { display: flex; align-items: center; justify-content: center; width: 50px; height: 50px; border-radius: 3px; background: #fff; }
.zoom { border-radius: 3px; background: linear-gradient(#e2e2e2, #e2e2e2) center / 37px 1px no-repeat #fff; }
.zoom .map-btn { background: none; }
.zoom .map-btn + .map-btn { margin-top: 1px; }
.attribution { position: absolute; right: 0; bottom: 0; display: flex; gap: 2px; font-size: 12px; line-height: 17px; color: #3a3a3a; }
.attribution > * { padding: 0 8px; background: #c4c4c2; }

/* Pothole ids */
.id-list {
  display: grid;
  grid-auto-rows: 1fr;
  gap: 10px;
  width: 60%;
  min-height: 278px;
  margin: 10px auto 0;
}
.id-btn { border-radius: 5px; background: #ea0040; color: #fff; font-size: 20px; }
```
